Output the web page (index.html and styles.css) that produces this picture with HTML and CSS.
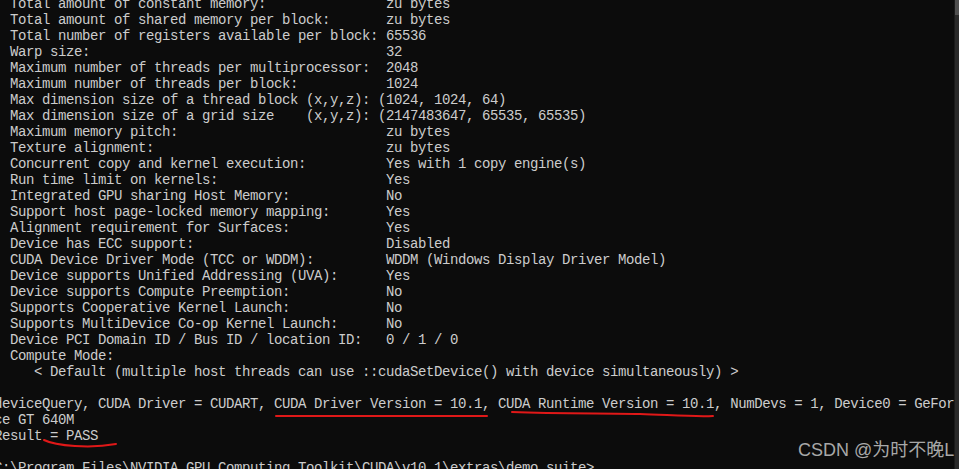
FILE: index.html
```html
<!DOCTYPE html>
<html lang="en">
<head>
<meta charset="utf-8">
<title>deviceQuery</title>
<link rel="stylesheet" href="styles.css">
</head>
<body>
<div class="window">
<div class="console">
<pre class="output">  Total amount of constant memory:               zu bytes
  Total amount of shared memory per block:       zu bytes
  Total number of registers available per block: 65536
  Warp size:                                     32
  Maximum number of threads per multiprocessor:  2048
  Maximum number of threads per block:           1024
  Max dimension size of a thread block (x,y,z): (1024, 1024, 64)
  Max dimension size of a grid size    (x,y,z): (2147483647, 65535, 65535)
  Maximum memory pitch:                          zu bytes
  Texture alignment:                             zu bytes
  Concurrent copy and kernel execution:          Yes with 1 copy engine(s)
  Run time limit on kernels:                     Yes
  Integrated GPU sharing Host Memory:            No
  Support host page-locked memory mapping:       Yes
  Alignment requirement for Surfaces:            Yes
  Device has ECC support:                        Disabled
  CUDA Device Driver Mode (TCC or WDDM):         WDDM (Windows Display Driver Model)
  Device supports Unified Addressing (UVA):      Yes
  Device supports Compute Preemption:            No
  Supports Cooperative Kernel Launch:            No
  Supports MultiDevice Co-op Kernel Launch:      No
  Device PCI Domain ID / Bus ID / location ID:   0 / 1 / 0
  Compute Mode:
     &lt; Default (multiple host threads can use ::cudaSetDevice() with device simultaneously) &gt;

deviceQuery, CUDA Driver = CUDART, CUDA Driver Version = 10.1, CUDA Runtime Version = 10.1, NumDevs = 1, Device0 = GeFor
ce GT 640M
Result = PASS

C:\Program Files\NVIDIA GPU Computing Toolkit\CUDA\v10.1\extras\demo_suite&gt;</pre>
</div>
<div class="scrollbar"><div class="thumb"></div></div>
</div>
<svg class="marks" width="959" height="469" viewBox="0 0 959 469" aria-hidden="true">
  <path d="M276 416 L487 416" />
  <path d="M512 412 C560 414, 610 413, 640 414 C670 415, 695 417, 713 416" />
  <path d="M44 440 C50 443, 60 445, 75 446 C90 447, 105 446, 116 444" />
</svg>
<div class="watermark">CSDN @为时不晚L</div>
</body>
</html>
```

FILE: styles.css
```css
html, body {
  margin: 0;
  padding: 0;
}

body {
  width: 959px;
  height: 469px;
  overflow: hidden;
  background: #0c0c0c;
  position: relative;
}

.window {
  display: flex;
  height: 469px;
}

.console {
  flex: 0 0 954px;
  overflow: hidden;
}

.output {
  margin: -4px 0 0 -6px;
  font-family: "Liberation Mono", monospace;
  font-size: 14px;
  letter-spacing: -0.4px;
  line-height: 16px;
  color: #cccccc;
  white-space: pre;
}

.scrollbar {
  flex: 1;
  background: #2a2a2a;
  border-left: 1px solid #1a1a1a;
}

.thumb {
  height: 15px;
  background: #4f4f4f;
}

.marks {
  position: absolute;
  left: 0;
  top: 0;
  pointer-events: none;
}

.marks path {
  fill: none;
  stroke: #e01818;
  stroke-width: 2;
  stroke-linecap: round;
}

.watermark {
  position: absolute;
  left: 798px;
  top: 438px;
  font-family: "Liberation Sans", "Noto Sans CJK SC", sans-serif;
  font-size: 18px;
  line-height: 24px;
  color: #a8a8a8;
  white-space: nowrap;
}
```
